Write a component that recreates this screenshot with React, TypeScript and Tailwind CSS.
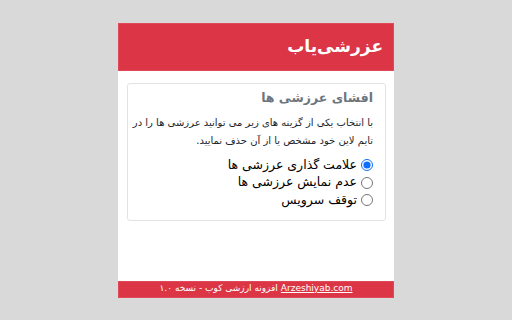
import React from 'react'

const options = [
  { label: 'علامت گذاری عرزشی ها', checked: true },
  { label: 'عدم نمایش عرزشی ها', checked: false },
  { label: 'توقف سرویس', checked: false },
]

const App: React.FC = () => {
  return (
    <div
      dir="rtl"
      className="min-h-screen w-full bg-[#d9d9d9] flex items-center justify-center"
      style={{ fontFamily: '"DejaVu Sans", sans-serif' }}
    >
      <div className="w-[276px] h-[275px] bg-white flex flex-col">
        {/* Header */}
        <div className="h-[48px] bg-[#dc3545] border border-[#e04a58] flex items-center px-[10px]">
          <h1 className="text-white font-bold text-[17px] leading-none">عزرشی‌یاب</h1>
        </div>

        {/* Body */}
        <div className="flex-1 pt-[12px] pr-[8px] pl-[9px]">
          <div className="h-[138px] border border-[#e3e3e3] rounded-[3px] px-[12px] pt-[4px]">
            <h2 className="text-[#6c757d] font-bold text-[12.5px] leading-[20px] mb-[6px]">افشای عرزشی ها</h2>
            <p className="text-[#212529] text-[10px] leading-[18.5px] mb-[6px]">
              <span className="block whitespace-nowrap">با انتخاب یکی از گزینه های زیر می توانید عرزشی ها را در</span>
              <span className="block whitespace-nowrap">تایم لاین خود مشخص یا از آن حذف نمایید.</span>
            </p>
            <div className="flex flex-col">
              {options.map((o) => (
                <label key={o.label} className="flex items-center gap-[4px] h-[17.5px] text-[12.5px] text-black">
                  <input
                    type="radio"
                    name="mode"
                    defaultChecked={o.checked}
                    className="w-[12px] h-[12px] m-0 accent-[#0d6efd]"
                  />
                  <span>{o.label}</span>
                </label>
              ))}
            </div>
          </div>
        </div>

        {/* Footer */}
        <div className="h-[17px] bg-[#dc3545] border border-[#e04a58] flex items-center justify-center text-white text-[9px]">
          <a href="#" className="underline" dir="ltr">Arzeshiyab.com</a>
          <span className="mr-[3px]">افزونه ارزشی کوب - نسخه ۱.۰</span>
        </div>
      </div>
    </div>
  )
}

export default App
